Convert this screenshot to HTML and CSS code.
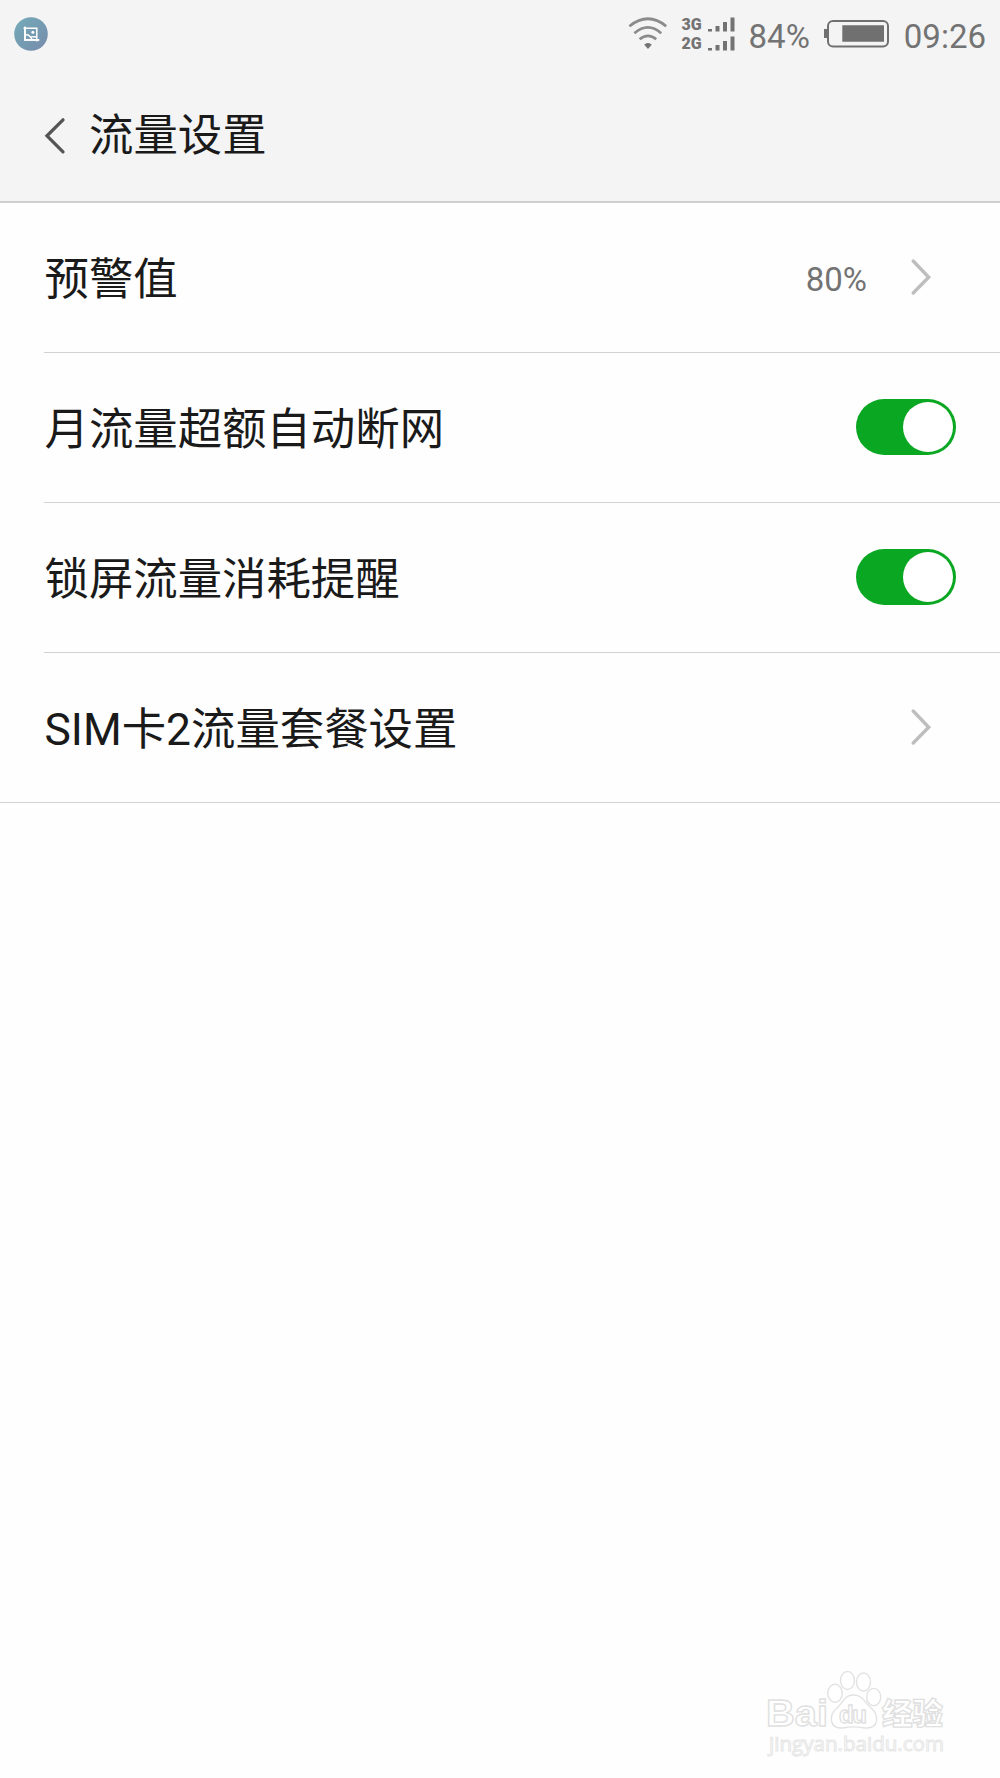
FILE: index.html
```html
<!DOCTYPE html>
<html lang="zh-CN">
<head>
  <meta charset="UTF-8">
  <meta name="viewport" content="width=device-width, initial-scale=1.0">
  <title>流量设置</title>
  <link rel="stylesheet" href="styles.css">
</head>
<body>
  <header>
    <div class="status-bar">
      <svg class="app-icon" width="34" height="34" viewBox="0 0 34 34">
        <defs>
          <linearGradient id="appColor" x1="0" y1="0" x2="1" y2="1">
            <stop offset="0.1" stop-color="#74a9b7"/>
            <stop offset="0.9" stop-color="#768ead"/>
          </linearGradient>
        </defs>
        <circle cx="17" cy="17" r="16.8" fill="url(#appColor)"/>
        <path d="M11 9.7v13.2h14.2M9.5 11.3h13.3v13.2" fill="none" stroke="#fff" stroke-width="1.5"/>
        <path d="M11 9.7v13.2h14.2" fill="none" stroke="#fff" stroke-width="1.9"/>
        <circle cx="18.9" cy="15.2" r="1.5" fill="#fff"/>
        <path d="M11.5 18.2c2-1 3.4 0 4.7 1.6 1.7.9 2.3-.7 6 .2M16.2 19.8l1.8 2.4" fill="none" stroke="#fff" stroke-width="1.4"/>
      </svg>
      <svg class="wifi" width="40" height="34" viewBox="0 0 40 34" fill="none" stroke="#8b8b8b" stroke-width="2.7">
        <path d="M1.4 9.2Q20 -5.7 38.2 9.2"/>
        <path d="M6.4 16.2Q20 4.7 33.2 16.2"/>
        <path d="M11.6 22.3Q20 15.5 28.2 22.3"/>
        <path d="M17.2 27.8Q20 25.6 22.8 27.8L20 31z" fill="#757575" stroke="#757575" stroke-width="1.3"/>
      </svg>
      <div class="signals">
        <div class="signal">
          <span>3G</span>
          <svg width="27" height="15" viewBox="0 0 27 15">
            <path d="M0 12h4v2.5H0zM7.5 9h4v5.5h-4zM15 5h4v9.5h-4zM22.5 .5h4v14h-4z" fill="#737373"/>
          </svg>
        </div>
        <div class="signal">
          <span>2G</span>
          <svg width="27" height="15" viewBox="0 0 27 15">
            <path d="M0 12h4v2.5H0zM7.5 9h4v5.5h-4zM15 5h4v9.5h-4zM22.5 .5h4v14h-4z" fill="#737373"/>
          </svg>
        </div>
      </div>
      <span class="battery-text">84%</span>
      <svg class="battery" width="66" height="30" viewBox="0 0 66 30">
        <rect x="4" y="2" width="60" height="25.5" rx="5" fill="none" stroke="#707070" stroke-width="2"/>
        <path d="M0 10h4v9H0z" fill="#707070"/>
        <path d="M18.3 6.2H60v16.5H18.3z" fill="#707070"/>
      </svg>
      <span class="clock">09:26</span>
    </div>
    <div class="title-bar">
      <svg class="back" width="24" height="40" viewBox="0 0 24 40">
        <path d="M19 3.8L3 19.8 19 35.8" fill="none" stroke="#555" stroke-width="3.3" stroke-linecap="round"/>
      </svg>
      <h1>流量设置</h1>
    </div>
  </header>

  <main>
    <div class="row">
      <span class="label">预警值</span>
      <span class="value">80%</span>
      <svg class="arrow" width="22" height="40" viewBox="0 0 22 40">
        <path d="M3.2 4L18.7 20.2 3.2 36" fill="none" stroke="#bebebe" stroke-width="3.4" stroke-linecap="round"/>
      </svg>
    </div>
    <div class="row">
      <span class="label">月流量超额自动断网</span>
      <div class="switch"></div>
    </div>
    <div class="row">
      <span class="label">锁屏流量消耗提醒</span>
      <div class="switch"></div>
    </div>
    <div class="row">
      <span class="label">SIM卡2流量套餐设置</span>
      <svg class="arrow" width="22" height="40" viewBox="0 0 22 40">
        <path d="M3.2 4L18.7 20.2 3.2 36" fill="none" stroke="#bebebe" stroke-width="3.4" stroke-linecap="round"/>
      </svg>
    </div>
  </main>

  <footer>
    <svg class="watermark" width="190" height="90" viewBox="0 0 190 90">
      <text x="1" y="56" font-size="37" textLength="62" lengthAdjust="spacingAndGlyphs">Bai</text>
      <text class="cn" x="117" y="54" font-size="30" textLength="61" lengthAdjust="spacingAndGlyphs">经验</text>
      <g fill="#fff" stroke="#e2e2e2" stroke-width="1.4">
        <ellipse cx="70" cy="23.3" rx="7.3" ry="9"/>
        <ellipse cx="82.5" cy="10.5" rx="7" ry="9"/>
        <ellipse cx="98.5" cy="12" rx="7" ry="9"/>
        <ellipse cx="108.7" cy="27" rx="7" ry="8.6"/>
        <path d="M88.5 25C80 25 78 32 73 37C67 42 65.5 46 66.5 51C68 58 74 58.5 79 57.7C86 56.5 91 56.5 98 57.7C104 58.7 110 57.5 111.5 51C112.5 45 110 41 105 37C100 32 97 25 88.5 25Z"/>
      </g>
      <text class="du" x="74" y="52.5" font-size="24" textLength="28">du</text>
      <text class="site" x="4" y="80.5" font-size="20" textLength="175" lengthAdjust="spacingAndGlyphs">jingyan.baidu.com</text>
    </svg>
  </footer>
</body>
</html>
```
FILE: styles.css
```css
* {
  margin: 0;
  padding: 0;
  box-sizing: border-box;
}

body {
  font-family: Roboto, "Noto Sans CJK SC", sans-serif;
  display: flex;
  flex-direction: column;
  height: 100vh;
  overflow: hidden;
  background-color: #fefefe;
  color: #1a1a1a;
}

header {
  height: 203px;
  background-color: #f4f4f4;
  border-bottom: 2px solid #cfcfcf;
}

svg {
  display: block;
  flex-shrink: 0;
}

/* status bar */
.status-bar {
  display: flex;
  align-items: center;
  height: 68px;
  padding: 0 14px 0 13.5px;
  color: #737373;
  font-size: 33px;
  line-height: 40px;
}

.wifi {
  margin: 0 14px 0 auto;
}

.signals {
  display: flex;
  flex-direction: column;
  gap: 3.5px;
  width: 53px;
  margin-right: 14px;
}

.signal {
  display: flex;
  align-items: center;
  justify-content: space-between;
  height: 15px;
  font-size: 16px;
  font-weight: 900;
  line-height: 15px;
}

.battery-text,
.clock {
  padding-top: 6px;
}

.battery {
  margin: 0 14px;
}

/* title */
.title-bar {
  display: flex;
  align-items: center;
  height: 135px;
  padding: 0 0 0 44px;
}

h1 {
  margin-left: 21px;
  padding-top: 1px;
  font-size: 44.4px;
  font-weight: 400;
  line-height: 60px;
}

/* settings list */
.row {
  display: flex;
  align-items: center;
  height: 150px;
  margin-left: 44px;
  padding-right: 44px;
  padding-bottom: 2px;
  border-bottom: 1px solid #d2d2d2;
}

.row:last-child {
  margin-left: 0;
  padding-left: 44px;
}

.label {
  flex: 1;
  padding-top: 7px;
  padding-left: 0.5px;
  font-size: 44.4px;
  line-height: 60px;
}

.value {
  color: #737373;
  font-size: 33px;
  line-height: 40px;
  padding-top: 6px;
}

.arrow {
  margin: 0 24px 0 43px;
}

.switch {
  display: flex;
  justify-content: flex-end;
  width: 100.5px;
  height: 56px;
  padding: 3px;
  border-radius: 28px;
  background-color: #0aa722;
}

.switch::after {
  content: '';
  width: 50px;
  height: 50px;
  border-radius: 50%;
  background-color: #fff;
}

footer {
  display: flex;
  justify-content: flex-end;
  margin-top: auto;
  padding: 0 45px 18px 0;
}

.watermark text {
  fill: #fff;
  stroke: #e0e0e0;
  stroke-width: 1.3px;
  font-family: "Liberation Sans", sans-serif;
  font-weight: 700;
}

.watermark .cn {
  font-family: "Noto Sans CJK SC", sans-serif;
  font-weight: 900;
}

.watermark .site {
  font-family: "Open Sans", sans-serif;
  font-weight: 400;
  stroke: #e6e6e6;
  stroke-width: 1px;
}
```
